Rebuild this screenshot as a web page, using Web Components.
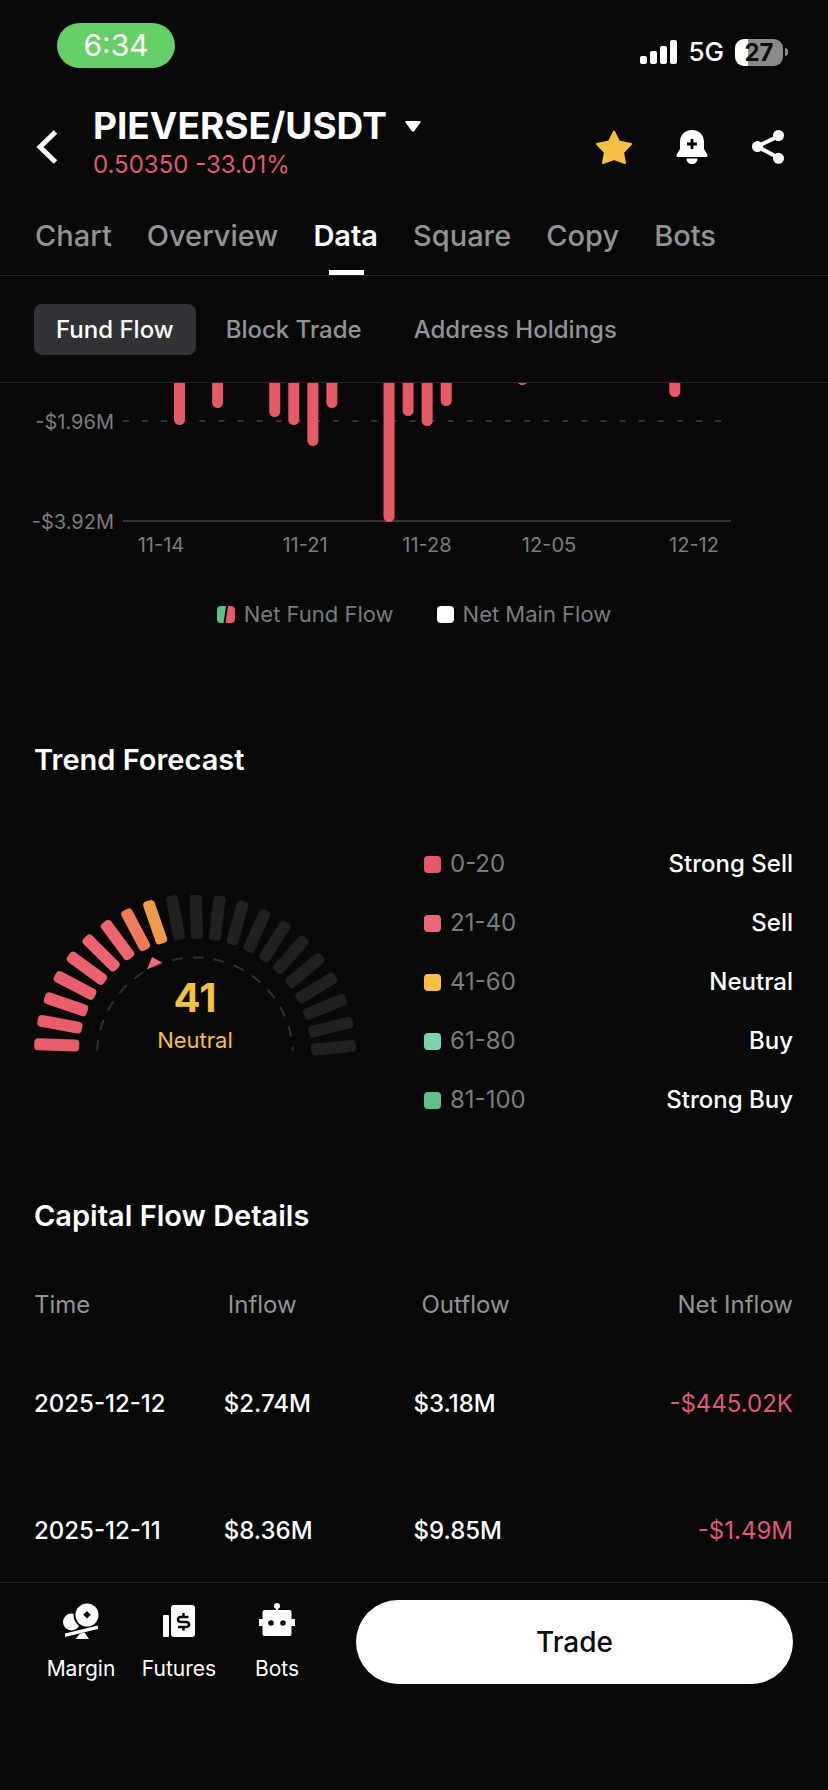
<!DOCTYPE html>
<html lang="en">
<head>
<meta charset="utf-8">
<meta name="viewport" content="width=device-width, initial-scale=1">
<title>PIEVERSE/USDT</title>
<style>
    :root {
        --bg: #080808;
        --line: #242526;
        --text: #ffffff;
        --muted: #929396;
        --dim: #7b7c7f;
        --red: #e65966;
        --pink: #ee6577;
        --yellow: #f5c043;
        --mint: #7dd3aa;
        --green: #5fc08b;
    }

    body {
        margin: 0;
        background: var(--bg);
        color: var(--text);
        font-family: Inter, "Liberation Sans", sans-serif;
    }
</style>
</head>
<body>
<trade-app></trade-app>

<script>
class BaseElement extends HTMLElement {
    connectedCallback() {
        if (this.shadowRoot !== null) {
            return;
        }

        this.attachShadow({ mode: "open" });
        this.shadowRoot.innerHTML = `
            <style>
                :host { display: block; }
                * { box-sizing: border-box; }
                button {
                    margin: 0;
                    padding: 0;
                    border: 0;
                    background: none;
                    color: inherit;
                    font: inherit;
                    cursor: pointer;
                }
                svg { display: block; }
            </style>
            ${this.render()}
        `;
    }
}

class StatusBar extends BaseElement {
    render() {
        return `
            <style>
                :host {
                    display: flex;
                    justify-content: space-between;
                    align-items: flex-start;
                    padding: 23px 40px 36px 57px;
                }
                .time {
                    width: 118px;
                    border-radius: 23px;
                    background: #66cf68;
                    font-size: 30px;
                    line-height: 45px;
                    text-align: center;
                }
                .signals {
                    display: flex;
                    align-items: center;
                    gap: 11px;
                    padding-top: 13px;
                    font-size: 26px;
                    font-weight: 500;
                    line-height: 32px;
                }
                .battery { display: flex; align-items: center; gap: 2px; }
                .level {
                    width: 48px;
                    border-radius: 9px;
                    background: linear-gradient(to right, #fff 27%, #8b8b8b 27%);
                    color: #0c0c0c;
                    font-size: 24px;
                    font-weight: 700;
                    line-height: 27px;
                    text-align: center;
                }
                .cap {
                    width: 3px;
                    height: 8px;
                    border-radius: 0 4px 4px 0;
                    background: #8b8b8b;
                }
            </style>
            <div class="time">6:34</div>
            <div class="signals">
                <svg width="37" height="24" fill="#fff">
                    <rect x="0" y="16" width="7" height="8" rx="2"/>
                    <rect x="10" y="11" width="7" height="13" rx="2"/>
                    <rect x="20" y="6" width="7" height="18" rx="2"/>
                    <rect x="30" y="0" width="7" height="24" rx="2"/>
                </svg>
                <span>5G</span>
                <div class="battery">
                    <div class="level">27</div>
                    <div class="cap"></div>
                </div>
            </div>
        `;
    }
}

class PairHeader extends BaseElement {
    render() {
        return `
            <style>
                :host {
                    display: flex;
                    align-items: center;
                    padding: 0 44px 0 36px;
                }
                .icon { padding-top: 8px; }
                .pair { flex: 1; padding-left: 35px; }
                h1 { margin: 0; font-size: 37px; line-height: 44px; }
                .select { display: flex; align-items: center; gap: 18px; font-weight: 700; }
                .price { color: #df5b72; font-size: 24px; line-height: 34px; }
                .actions { display: flex; gap: 44px; }
            </style>
            <button class="icon" aria-label="Back">
                <svg width="22" height="34" fill="none" stroke="#fff" stroke-width="5">
                    <path d="M19.500 2L4 17l15.500 15"/>
                </svg>
            </button>
            <div class="pair">
                <h1>
                    <button class="select">
                        <span>PIEVERSE/USDT</span>
                        <svg width="16" height="11" fill="#fff"><path d="M1.500 0h13q2 0 .8 1.800L9.300 10Q8 11.500 6.700 10L.7 1.800Q-.5 0 1.500 0z"/></svg>
                    </button>
                </h1>
                <div class="price">0.50350 -33.01%</div>
            </div>
            <div class="actions">
                <button class="icon" aria-label="Favorite">
                    <svg width="36" height="34" fill="#f5c043" stroke="#f5c043" stroke-width="2" stroke-linejoin="round">
                        <path d="M18 1.500l5 10 12 2.500-8 8.500 2 10.500-11-4-11 4 2-10.500L1 14l12-2.500z"/>
                    </svg>
                </button>
                <button class="icon" aria-label="Add alert">
                    <svg width="32" height="34" fill="#fff">
                        <path d="M16 0C8.500 0 4 5 4 12v7L.7 24.500Q0 27 2 27h28q2 0 1.300-2.500L28 19v-7C28 5 23.500 0 16 0z"/>
                        <path d="M10.500 28.500h11c0 3.500-2.300 5.500-5.500 5.500s-5.500-2-5.500-5.500z"/>
                        <path d="M16 9v10M11 14h10" stroke="#080808" stroke-width="3"/>
                    </svg>
                </button>
                <button class="icon" aria-label="Share">
                    <svg width="32" height="34" fill="#fff">
                        <path d="M27 6L5 16.500 27 28" fill="none" stroke="#fff" stroke-width="4"/>
                        <circle cx="26.500" cy="5.500" r="5.500"/>
                        <circle cx="5.500" cy="16.500" r="5.500"/>
                        <circle cx="26.500" cy="28.300" r="5.500"/>
                    </svg>
                </button>
            </div>
        `;
    }
}

class PairTabs extends BaseElement {
    render() {
        const tabs = ["Chart", "Overview", "Data", "Square", "Copy", "Bots"];

        return `
            <style>
                nav {
                    display: flex;
                    gap: 35px;
                    padding: 0 35px;
                    border-bottom: 1px solid var(--line);
                }
                button {
                    position: relative;
                    padding: 37px 0 22px;
                    color: var(--muted);
                    font-size: 29px;
                    font-weight: 500;
                    line-height: 34px;
                }
                .active { color: var(--text); font-weight: 600; }
                .active::after {
                    content: "";
                    position: absolute;
                    bottom: 0;
                    left: calc(50% - 17px);
                    width: 35px;
                    height: 5px;
                    background: #fff;
                }
            </style>
            <nav>
                ${tabs.map((tab) => `<button class="${tab === "Data" ? "active" : ""}">${tab}</button>`).join("")}
            </nav>
        `;
    }
}

class DataTabs extends BaseElement {
    render() {
        return `
            <style>
                nav {
                    display: flex;
                    gap: 8px;
                    padding: 28px 34px 27px;
                    border-bottom: 1px solid var(--line);
                }
                button {
                    padding: 0 22px;
                    border-radius: 8px;
                    color: var(--muted);
                    font-size: 24px;
                    font-weight: 500;
                    line-height: 51px;
                }
                .active { background: #313236; color: var(--text); }
            </style>
            <nav>
                <button class="active">Fund Flow</button>
                <button>Block Trade</button>
                <button>Address Holdings</button>
            </nav>
        `;
    }
}

class FlowChart extends BaseElement {
    render() {
        // [day slot, bar bottom]
        const bars = [
            [0, 42], [2, 25], [5, 34], [6, 42], [7, 63], [8, 25],
            [11, 139], [12, 33], [13, 43], [14, 23], [18, 2], [26, 14]
        ];
        const days = [[161, "11-14"], [305, "11-21"], [427, "11-28"], [549, "12-05"], [694, "12-12"]];

        return `
            <style>
                .plot { width: 100%; }
                text { fill: var(--dim); font-size: 20px; }
                .legend {
                    display: flex;
                    justify-content: center;
                    gap: 43px;
                    padding-top: 29px;
                    color: var(--dim);
                    font-size: 22px;
                    line-height: 30px;
                }
                .legend span { display: flex; align-items: center; gap: 9px; }
            </style>
            <svg class="plot" viewBox="0 0 828 187">
                <path d="M123 38H724" stroke="#343536" stroke-width="2" stroke-dasharray="6 13.100"/>
                <path d="M123 138H731" stroke="#343536" stroke-width="2"/>
                ${bars.map(([slot, end]) => `<rect x="${174 + slot * 19.05}" y="-20" width="11" height="${end + 20}" rx="5.500" fill="#e65966"/>`).join("")}
                <text x="114" y="46" text-anchor="end">-$1.96M</text>
                <text x="114" y="146" text-anchor="end">-$3.92M</text>
                ${days.map(([x, day]) => `<text x="${x}" y="169" text-anchor="middle">${day}</text>`).join("")}
            </svg>
            <div class="legend">
                <span>
                    <svg width="18" height="17">
                        <path d="M4 0h5L6.500 17H4q-4 0-4-4V4q0-4 4-4z" fill="#5fc08b"/>
                        <path d="M11 0h3q4 0 4 4v9q0 4-4 4H8.500z" fill="#e65966"/>
                    </svg>
                    Net Fund Flow
                </span>
                <span>
                    <svg width="17" height="17"><rect width="17" height="17" rx="4" fill="#fff"/></svg>
                    Net Main Flow
                </span>
            </div>
        `;
    }
}

class TrendGauge extends BaseElement {
    render() {
        const lit = ["#e85c69", "#e85d6a", "#e95e6b", "#ea5f6d", "#eb616f", "#ec6371", "#eb666e", "#ef7b5d", "#f09a4c"];
        let bars = "";

        for (let i = 0; i < 21; i++) {
            const angle = 1.7 + i * 8.64;
            bars += `<rect x="-161" y="-12" width="45" height="12" rx="4" fill="${lit[i] || "#1f2022"}" transform="rotate(${angle})"/>`;
        }

        return `
            <style>
                svg { width: 100%; }
                .value { fill: var(--yellow); font-size: 40px; font-weight: 700; }
                .label { fill: var(--yellow); font-size: 22px; }
            </style>
            <svg viewBox="0 0 323 174" text-anchor="middle">
                <g transform="translate(161 160)">
                    ${bars}
                    <path d="M-97.900 -4A98 98 0 0 1 97.900 -4" fill="none" stroke="#303133" stroke-width="2" stroke-dasharray="11 10"/>
                    <path d="M-43 -98l-5 12.500 15-7z" fill="#e96b7c"/>
                </g>
                <text class="value" x="161" y="117">41</text>
                <text class="label" x="161" y="153">Neutral</text>
            </svg>
        `;
    }
}

class TrendForecast extends BaseElement {
    render() {
        const ranges = [
            ["0-20", "Strong Sell", "--red"],
            ["21-40", "Sell", "--pink"],
            ["41-60", "Neutral", "--yellow"],
            ["61-80", "Buy", "--mint"],
            ["81-100", "Strong Buy", "--green"]
        ];

        return `
            <style>
                :host { padding: 113px 35px 0 34px; }
                h2 { margin: 0 0 71px; font-size: 29px; font-weight: 600; line-height: 36px; }
                .content {
                    display: grid;
                    grid-template-columns: 323fr 369fr;
                    align-items: center;
                    gap: 67px;
                }
                ul {
                    display: grid;
                    gap: 29px;
                    margin: 0;
                    padding: 0;
                    list-style: none;
                    font-size: 24px;
                    line-height: 30px;
                }
                li { display: flex; align-items: center; gap: 9px; }
                i { width: 17px; height: 17px; border-radius: 4px; }
                .range { flex: 1; color: var(--dim); }
                .name { font-weight: 500; }
            </style>
            <h2>Trend Forecast</h2>
            <div class="content">
                <trend-gauge></trend-gauge>
                <ul>
                    ${ranges.map(([range, name, color]) => `
                        <li>
                            <i style="background: var(${color})"></i>
                            <span class="range">${range}</span>
                            <span class="name">${name}</span>
                        </li>
                    `).join("")}
                </ul>
            </div>
        `;
    }
}

class FlowDetails extends BaseElement {
    render() {
        const rows = [
            ["2025-12-12", "$2.74M", "$3.18M", "-$445.02K"],
            ["2025-12-11", "$8.36M", "$9.85M", "-$1.49M"]
        ];

        return `
            <style>
                :host { padding: 83px 35px 0 34px; }
                h2 { margin: 0 0 36px; font-size: 29px; font-weight: 600; line-height: 36px; }
                table {
                    width: 100%;
                    border-collapse: collapse;
                    table-layout: fixed;
                    font-size: 24px;
                    line-height: 30px;
                }
                th, td { padding: 0; text-align: left; white-space: nowrap; }
                th { height: 70px; color: var(--muted); font-weight: 400; }
                th:nth-child(2) { padding-left: 4px; }
                th:nth-child(3) { padding-left: 8px; }
                td { height: 127px; font-weight: 500; }
                th:last-child, td:last-child { text-align: right; }
                td:last-child { color: #df5b72; font-weight: 400; }
            </style>
            <h2>Capital Flow Details</h2>
            <table>
                <thead>
                    <tr><th>Time</th><th>Inflow</th><th>Outflow</th><th>Net Inflow</th></tr>
                </thead>
                <tbody>
                    ${rows.map((row) => `<tr>${row.map((cell) => `<td>${cell}</td>`).join("")}</tr>`).join("")}
                </tbody>
            </table>
        `;
    }
}

class BottomBar extends BaseElement {
    render() {
        return `
            <style>
                :host {
                    display: flex;
                    gap: 30px;
                    padding: 17px 35px 106px 32px;
                    border-top: 1px solid var(--line);
                }
                nav { display: grid; grid-template-columns: repeat(3, 98px); }
                nav button {
                    display: flex;
                    flex-direction: column;
                    align-items: center;
                    gap: 16px;
                    padding-top: 3px;
                    font-size: 21px;
                    line-height: 28px;
                }
                .trade {
                    flex: 1;
                    border-radius: 42px;
                    background: #fff;
                    color: #0c0c0c;
                    font-size: 28px;
                    font-weight: 500;
                    line-height: 84px;
                }
            </style>
            <nav>
                <button>
                    <svg width="36" height="36" fill="#fff">
                        <circle cx="8.500" cy="19" r="8.500"/>
                        <circle cx="24" cy="12" r="13.500" fill="#080808"/>
                        <circle cx="24" cy="12" r="11.500"/>
                        <path d="M24 8l3.800 3.800-3.800 3.800-3.800-3.800z" fill="#080808"/>
                        <path d="M1 31L35 21.500v6L2 35z" fill="#080808"/>
                        <path d="M2 30.500l33-8v3.500L2 34z"/>
                        <path d="M17 30.800l4.500-1.200 4.500 6.400H12.500z"/>
                    </svg>
                    Margin
                </button>
                <button>
                    <svg width="36" height="36" fill="#fff">
                        <rect x="2" y="12" width="6" height="22" rx="1"/>
                        <rect x="10" y="2" width="24" height="32" rx="3"/>
                        <path d="M27.500 14H20q-3 0-3 2.500t3 2.500h5q3 0 3 2.500T25 24h-8M22.500 10v4M22.500 24v3.500" fill="none" stroke="#080808" stroke-width="2.500"/>
                    </svg>
                    Futures
                </button>
                <button>
                    <svg width="36" height="36" fill="#fff">
                        <circle cx="18" cy="3" r="3"/>
                        <path d="M17 4h2v5h-2z"/>
                        <rect x="3.500" y="7" width="29" height="26" rx="2"/>
                        <path d="M0 16h36v7H0z"/>
                        <circle cx="12" cy="20" r="2.800" fill="#080808"/>
                        <circle cx="24" cy="20" r="2.800" fill="#080808"/>
                    </svg>
                    Bots
                </button>
            </nav>
            <button class="trade">Trade</button>
        `;
    }
}

class TradeApp extends BaseElement {
    render() {
        return `
            <style>
                :host { display: flex; flex-direction: column; height: 100vh; }
                main {
                    flex: 1;
                    min-height: 0;
                    overflow-y: auto;
                    scrollbar-width: none;
                }
            </style>
            <status-bar></status-bar>
            <pair-header></pair-header>
            <pair-tabs></pair-tabs>
            <data-tabs></data-tabs>
            <main>
                <flow-chart></flow-chart>
                <trend-forecast></trend-forecast>
                <flow-details></flow-details>
            </main>
            <bottom-bar></bottom-bar>
        `;
    }
}

customElements.define("status-bar", StatusBar);
customElements.define("pair-header", PairHeader);
customElements.define("pair-tabs", PairTabs);
customElements.define("data-tabs", DataTabs);
customElements.define("flow-chart", FlowChart);
customElements.define("trend-gauge", TrendGauge);
customElements.define("trend-forecast", TrendForecast);
customElements.define("flow-details", FlowDetails);
customElements.define("bottom-bar", BottomBar);
customElements.define("trade-app", TradeApp);
</script>
</body>
</html>
